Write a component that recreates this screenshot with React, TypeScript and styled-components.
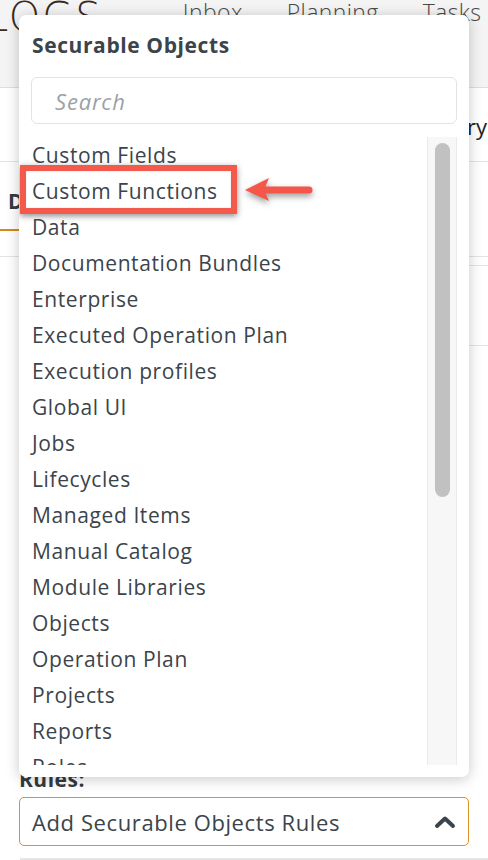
import styled, { createGlobalStyle } from "styled-components";

const GlobalStyle = createGlobalStyle`
  html, body {
    margin: 0;
    padding: 0;
    background: #ffffff;
    overflow: hidden;
  }
  body {
    font-family: "Open Sans", Lato, sans-serif;
    color: #3b444b;
  }
  * {
    box-sizing: border-box;
  }
`;

const Page = styled.div`
  position: relative;
  width: 488px;
  height: 860px;
  overflow: hidden;
`;

const Header = styled.div`
  height: 88px;
  background: #f4f4f4;
  border-bottom: 1px solid #dedede;
  display: flex;
  align-items: flex-start;
`;

const Logo = styled.div`
  font-family: "DejaVu Sans", sans-serif;
  font-weight: 200;
  font-size: 40px;
  line-height: 1;
  color: #3a2a1c;
  letter-spacing: 2px;
  margin-left: -14px;
  margin-top: -3px;
`;

const Nav = styled.div`
  display: flex;
  gap: 44px;
  margin-left: 80px;
  margin-top: -4px;
`;

const NavItem = styled.span`
  font-size: 23px;
  font-weight: 300;
  color: #4a4a4a;
  line-height: 32px;
  letter-spacing: 0.4px;
`;

const TitleRow = styled.div`
  height: 74px;
  border-bottom: 1px solid #e4e4e4;
  display: flex;
  justify-content: flex-end;
  align-items: center;
  padding-right: 1px;
  padding-top: 2px;
`;

const TitleText = styled.span`
  font-size: 22px;
  color: #222;
`;

const Tabs = styled.div`
  height: 95px;
  border-bottom: 1px solid #e4e4e4;
  display: flex;
  align-items: flex-end;
`;

const Tab = styled.div<{ $active?: boolean }>`
  padding: 0 8px 14px 8px;
  height: 68px;
  display: flex;
  align-items: flex-end;
  font-weight: 700;
  font-size: 21px;
  line-height: 27px;
  color: #333b41;
  border-bottom: 2px solid ${(p) => (p.$active ? "#d9861c" : "transparent")};
  margin-bottom: 25px;
`;

const Panel = styled.div`
  margin: 8px 0 0 19px;
  height: 81px;
  border-top: 1px solid #e4e4e4;
  border-bottom: 1px solid #e4e4e4;
`;

const RulesSection = styled.div`
  margin-top: 421px;
  padding: 0 19px;
`;

const Label = styled.div`
  font-weight: 700;
  font-size: 21px;
  line-height: 24px;
  color: #333b41;
  letter-spacing: 0.5px;
`;

const Select = styled.div`
  margin-top: 6px;
  height: 49px;
  border: 1px solid #e0922a;
  border-radius: 5px;
  display: flex;
  align-items: center;
  justify-content: space-between;
  padding: 0 12px 0 12px;
  font-size: 22px;
  letter-spacing: 0.6px;
  color: #3b444b;
`;

const NextBox = styled.div`
  margin: 12px 0 0 20px;
  height: 40px;
  border-top: 2px solid #e6e6e6;
  background: #fafafa;
`;

const Popover = styled.div`
  position: absolute;
  top: 15px;
  left: 19px;
  width: 450px;
  height: 762px;
  background: #fff;
  border-radius: 7px;
  box-shadow: 0 2px 14px rgba(0, 0, 0, 0.22);
  display: flex;
  flex-direction: column;
  padding-bottom: 12px;
`;

const PopTitle = styled.div`
  font-weight: 700;
  font-size: 21px;
  letter-spacing: 0.6px;
  color: #3b444b;
  padding: 17px 13px 0;
  line-height: 26px;
`;

const Search = styled.div`
  margin: 19px 12px 0 12px;
  height: 47px;
  border: 1px solid #e3e3e3;
  border-radius: 6px;
  display: flex;
  align-items: center;
  padding-left: 23px;
  font-style: italic;
  font-size: 22px;
  letter-spacing: 0.8px;
  color: #9da1a6;
`;

const ListWrap = styled.div`
  margin-top: 13px;
  flex: 1;
  display: flex;
  min-height: 0;
  padding-right: 12px;
`;

const List = styled.div`
  flex: 1;
  overflow: hidden;
  padding-left: 13px;
`;

const Item = styled.div`
  position: relative;
  height: 36px;
  line-height: 36px;
  font-size: 21px;
  letter-spacing: 0.6px;
  color: #3b444b;
  white-space: nowrap;
`;

const Track = styled.div`
  width: 30px;
  background: #f7f7f7;
  border-left: 1px solid #ebebeb;
  border-right: 1px solid #ebebeb;
  padding: 6px 6px 0 7px;
`;

const Thumb = styled.div`
  height: 354px;
  border-radius: 8px;
  background: #c1c1c1;
`;

const HighlightBox = styled.div`
  position: absolute;
  left: -12px;
  top: -8px;
  width: 217px;
  height: 49px;
  border: 6px solid #f45a4b;
  box-shadow: 0 2px 6px rgba(0, 0, 0, 0.45), inset 0 0 2px rgba(0, 0, 0, 0.15);
`;

const Arrow = styled.svg`
  position: absolute;
  left: 213px;
  top: 3px;
  overflow: visible;
  filter: drop-shadow(0 3px 3px rgba(0, 0, 0, 0.4));
`;

const items = [
  "Custom Fields",
  "Custom Functions",
  "Data",
  "Documentation Bundles",
  "Enterprise",
  "Executed Operation Plan",
  "Execution profiles",
  "Global UI",
  "Jobs",
  "Lifecycles",
  "Managed Items",
  "Manual Catalog",
  "Module Libraries",
  "Objects",
  "Operation Plan",
  "Projects",
  "Reports",
  "Roles",
  "Samples",
];

const ChevronUp = () => (
  <svg width="22" height="14" viewBox="0 0 22 14">
    <path
      d="M3 11 L11 3.5 L19 11"
      fill="none"
      stroke="#3b444b"
      strokeWidth="4"
      strokeLinecap="round"
      strokeLinejoin="round"
    />
  </svg>
);

export default function App() {
  return (
    <Page>
      <GlobalStyle />
      <Header>
        <Logo>LOGS</Logo>
        <Nav>
          <NavItem>Inbox</NavItem>
          <NavItem>Planning</NavItem>
          <NavItem>Tasks</NavItem>
        </Nav>
      </Header>
      <TitleRow>
        <TitleText>Inventory</TitleText>
      </TitleRow>
      <Tabs>
        <Tab $active>Details</Tab>
      </Tabs>
      <Panel />
      <RulesSection>
        <Label>Rules:</Label>
        <Select>
          <span>Add Securable Objects Rules</span>
          <ChevronUp />
        </Select>
      </RulesSection>
      <NextBox />

      <Popover>
        <PopTitle>Securable Objects</PopTitle>
        <Search>Search</Search>
        <ListWrap>
          <List>
            {items.map((name) => (
              <Item key={name}>
                {name}
                {name === "Custom Functions" && (
                  <>
                    <HighlightBox />
                    <Arrow width="68" height="26" viewBox="0 0 68 26">
                      <path
                        d="M16 14 L64 14"
                        stroke="#f4564a"
                        strokeWidth="7"
                        strokeLinecap="round"
                      />
                      <path d="M0 14 L24 2 L19 14 L24 25 Z" fill="#f4564a" />
                    </Arrow>
                  </>
                )}
              </Item>
            ))}
          </List>
          <Track>
            <Thumb />
          </Track>
        </ListWrap>
      </Popover>
    </Page>
  );
}
